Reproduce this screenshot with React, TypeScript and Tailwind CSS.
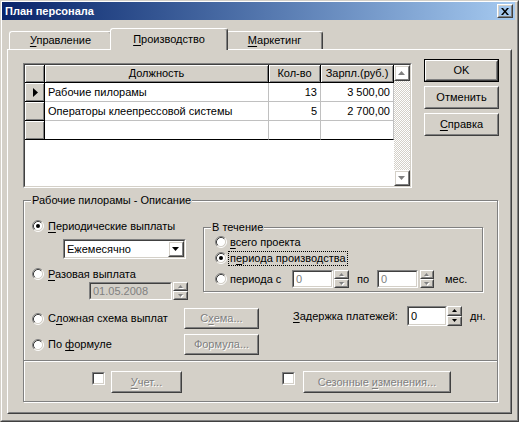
import type { ReactNode } from 'react'

const raisedOuter = 'border border-t-white border-l-white border-b-[#404040] border-r-[#404040]'
const raisedInner = 'border border-t-[#d4d0c8] border-l-[#d4d0c8] border-b-[#808080] border-r-[#808080]'
const sunkenOuter = 'border border-t-[#808080] border-l-[#808080] border-b-white border-r-white'
const sunkenInner = 'border border-t-[#404040] border-l-[#404040] border-b-[#d4d0c8] border-r-[#d4d0c8]'
const etched = 'border border-[#808080] shadow-[inset_1px_1px_0_#fff,1px_1px_0_#fff]'
const grayed = 'text-[#808080] [text-shadow:1px_1px_0_#fff]'
const fixedCell =
  'border-r border-b border-black bg-[#d4d0c8] shadow-[inset_1px_1px_0_#fff,inset_-1px_-1px_0_#808080]'

const ROWS = [
  { name: 'Рабочие пилорамы', qty: '13', pay: '3 500,00', current: true },
  { name: 'Операторы клеепрессовой системы', qty: '5', pay: '2 700,00', current: false },
  { name: '', qty: '', pay: '', current: false },
]

function Key({ children }: { children: ReactNode }) {
  return <span className="underline decoration-1 underline-offset-2">{children}</span>
}

function Raised({ className = '', children }: { className?: string; children?: ReactNode }) {
  return (
    <div className={`${raisedOuter} ${className}`}>
      <div className={`${raisedInner} flex h-full w-full items-center justify-center`}>{children}</div>
    </div>
  )
}

function Field({
  className = '',
  bg = 'bg-white',
  children,
}: {
  className?: string
  bg?: string
  children?: ReactNode
}) {
  return (
    <div className={`${sunkenOuter} ${className}`}>
      <div className={`${sunkenInner} flex h-full w-full items-center pl-[2px] ${bg}`}>{children}</div>
    </div>
  )
}

function Arrow({ dir, small = false, gray = false }: { dir: 'up' | 'down'; small?: boolean; gray?: boolean }) {
  const w = small ? 5 : 7
  const h = small ? 3 : 4
  const pts = dir === 'up' ? `${w / 2},0 ${w},${h} 0,${h}` : `0,0 ${w},0 ${w / 2},${h}`
  const shade =
    dir === 'up' ? `${w / 2 + 1},1 ${w + 1},${h + 1} 1,${h + 1}` : `1,1 ${w + 1},1 ${w / 2 + 1},${h + 1}`
  return (
    <svg width={w + 1} height={h + 1} className="shrink-0">
      {gray && <polygon points={shade} fill="#fff" />}
      <polygon points={pts} fill={gray ? '#808080' : '#000'} />
    </svg>
  )
}

function Spinner({ className = '', gray = false }: { className?: string; gray?: boolean }) {
  return (
    <div className={`flex flex-col ${className}`}>
      <Raised className="h-1/2 w-full">
        <Arrow dir="up" small gray={gray} />
      </Raised>
      <Raised className="h-1/2 w-full">
        <Arrow dir="down" small gray={gray} />
      </Raised>
    </div>
  )
}

function Radio({ checked = false }: { checked?: boolean }) {
  return (
    <svg width="12" height="12" viewBox="0 0 12 12" className="shrink-0">
      <circle cx="6" cy="6" r="4.5" fill="#fff" />
      <path d="M2.11 9.89A5.5 5.5 0 0 1 9.89 2.11" fill="none" stroke="#808080" />
      <path d="M9.89 2.11A5.5 5.5 0 0 1 2.11 9.89" fill="none" stroke="#fff" />
      <path d="M2.82 9.18A4.5 4.5 0 0 1 9.18 2.82" fill="none" stroke="#404040" />
      <path d="M9.18 2.82A4.5 4.5 0 0 1 2.82 9.18" fill="none" stroke="#d4d0c8" />
      {checked && <circle cx="6" cy="6" r="2" fill="#000" />}
    </svg>
  )
}

function Checkbox({ className = '' }: { className?: string }) {
  return (
    <div className={`${sunkenOuter} h-[13px] w-[13px] shrink-0 ${className}`}>
      <div className={`${sunkenInner} h-full w-full bg-white`} />
    </div>
  )
}

function Button({
  className = '',
  disabled = false,
  children,
}: {
  className?: string
  disabled?: boolean
  children: ReactNode
}) {
  return (
    <Raised className={className}>
      <span className={disabled ? grayed : ''}>{children}</span>
    </Raised>
  )
}

export default function App() {
  return (
    <div className="h-[422px] w-[519px] border border-t-[#d4d0c8] border-l-[#d4d0c8] border-b-[#404040] border-r-[#404040] bg-[#d4d0c8] font-['Liberation_Sans',Arial,sans-serif] text-[11px] leading-[13px] text-black">
      <div className="flex h-full w-full flex-col border border-t-white border-l-white border-b-[#808080] border-r-[#808080] pr-[2px] pb-[2px]">
        {/* title bar */}
        <div className="flex h-[18px] shrink-0 items-center bg-linear-to-r from-[#0a246a] to-[#a6caf0] pl-[3px] pr-[2px]">
          <span className="font-bold text-white">План персонала</span>
          <Raised className="ml-auto h-[14px] w-[16px]">
            <svg width="8" height="7" className="shrink-0">
              <path d="M0 0h2l2 2.5L6 0h2L5 3.5 8 7H6L4 4.5 2 7H0l3-3.5z" fill="#000" />
            </svg>
          </Raised>
        </div>

        {/* tabs */}
        <div className="ml-[5px] flex h-[29px] shrink-0 items-end pl-[2px]">
          <div className="flex h-[18px] w-[103px] items-center justify-center rounded-t-[3px] border-t border-l border-r border-t-white border-l-white border-r-[#404040] shadow-[inset_-1px_0_0_#808080]">
            <span>
              <Key>У</Key>правление
            </span>
          </div>
          <div className="relative z-10 -mx-[2px] -mb-px flex h-[22px] w-[118px] items-center justify-center rounded-t-[3px] border-t border-l border-r border-t-white border-l-white border-r-[#404040] bg-[#d4d0c8] shadow-[inset_-1px_0_0_#808080]">
            <span>
              <Key>П</Key>роизводство
            </span>
          </div>
          <div className="flex h-[18px] w-[97px] items-center justify-center rounded-t-[3px] border-t border-l border-r border-t-white border-l-white border-r-[#404040] shadow-[inset_-1px_0_0_#808080]">
            <span>
              <Key>М</Key>аркетинг
            </span>
          </div>
        </div>

        {/* tab panel */}
        <div className={`ml-[5px] h-[365px] w-[505px] shrink-0 ${raisedOuter}`}>
          <div className={`h-full w-full ${raisedInner}`}>
            <div className="flex items-start pl-[14px]">
              {/* grid */}
              <div className={`mt-[12px] h-[125px] w-[389px] ${sunkenOuter}`}>
                <div className={`flex h-full w-full bg-white ${sunkenInner}`}>
                  <div className="w-[369px]">
                    <div className="flex h-[18px]">
                      <div className={`w-[20px] ${fixedCell}`} />
                      <div className={`flex w-[224px] items-center justify-center ${fixedCell}`}>Должность</div>
                      <div className={`flex w-[52px] items-center justify-center ${fixedCell}`}>Кол-во</div>
                      <div className={`flex w-[73px] items-center justify-center ${fixedCell}`}>Зарпл.(руб.)</div>
                    </div>
                    {ROWS.map((r, i) => {
                      const line = i === ROWS.length - 1 ? 'border-b-black' : 'border-b-[#c0c0c0]'
                      return (
                        <div key={i} className="flex h-[19px]">
                          <div className={`flex w-[20px] items-center justify-center pl-[2px] ${fixedCell}`}>
                            {r.current && (
                              <svg width="5" height="9" className="shrink-0">
                                <polygon points="0,0 5,4.5 0,9" fill="#000" />
                              </svg>
                            )}
                          </div>
                          <div className={`flex w-[224px] items-center border-r border-b border-r-[#c0c0c0] pl-[3px] ${line}`}>
                            {r.name}
                          </div>
                          <div className={`flex w-[52px] items-center justify-end border-r border-b border-r-[#c0c0c0] pr-[3px] ${line}`}>
                            {r.qty}
                          </div>
                          <div className={`flex w-[73px] items-center justify-end border-r border-b border-r-[#c0c0c0] pr-[3px] ${line}`}>
                            {r.pay}
                          </div>
                        </div>
                      )
                    })}
                  </div>
                  <div className="flex w-[16px] flex-col">
                    <Raised className="h-[16px] w-[16px]">
                      <Arrow dir="up" gray />
                    </Raised>
                    <div className="flex-1 bg-[image:repeating-conic-gradient(#fff_0_25%,#d4d0c8_0_50%)] bg-[length:2px_2px]" />
                    <Raised className="h-[16px] w-[16px]">
                      <Arrow dir="down" gray />
                    </Raised>
                  </div>
                </div>
              </div>

              {/* dialog buttons */}
              <div className="ml-[12px] mt-[8px] flex flex-col gap-[4px]">
                <div className="h-[23px] w-[75px] border border-black">
                  <Raised className="h-full w-full">OK</Raised>
                </div>
                <Button className="h-[23px] w-[75px]">Отменить</Button>
                <Button className="h-[23px] w-[75px]">
                  <Key>С</Key>правка
                </Button>
              </div>
            </div>

            {/* description group */}
            <div className={`relative ml-[14px] mt-[12px] h-[202px] w-[475px] ${etched}`}>
              <span className="absolute -top-[7px] left-[7px] bg-[#d4d0c8] px-[1px]">Рабочие пилорамы - Описание</span>

              <div className="flex">
                <div className="flex w-[179px] flex-col">
                  <div className="ml-[8px] mt-[17px] flex h-[16px] items-center">
                    <Radio checked />
                    <span className="ml-[4px]">
                      <Key>П</Key>ериодические выплаты
                    </span>
                  </div>
                  <Field className="ml-[39px] mt-[5px] h-[20px] w-[123px]">
                    <span className="flex-1">Ежемесячно</span>
                    <Raised className="h-full w-[16px]">
                      <Arrow dir="down" />
                    </Raised>
                  </Field>
                  <div className="ml-[8px] mt-[7px] flex h-[16px] items-center">
                    <Radio />
                    <span className="ml-[4px]">
                      <Key>Р</Key>азовая выплата
                    </span>
                  </div>
                  <div className="ml-[65px] flex h-[18px]">
                    <Field className="h-full w-[83px]" bg="bg-[#d4d0c8]">
                      <span className="text-[#808080]">01.05.2008</span>
                    </Field>
                    <Spinner className="ml-[1px] h-full w-[15px]" gray />
                  </div>
                </div>

                <div className={`relative mt-[26px] h-[65px] w-[280px] ${etched}`}>
                  <span className="absolute -top-[7px] left-[7px] bg-[#d4d0c8] px-[1px]">В течение</span>
                  <div className="ml-[11px] mt-[6px] flex h-[16px] items-center">
                    <Radio />
                    <span className="ml-[3px]">
                      <Key>в</Key>сего проекта
                    </span>
                  </div>
                  <div className="ml-[11px] flex h-[16px] items-center">
                    <Radio checked />
                    <span className="ml-[1px] flex h-[15px] items-center border border-dotted border-black px-[1px]">
                      <span>
                        п<Key>е</Key>риода производства
                      </span>
                    </span>
                  </div>
                  <div className="ml-[11px] mt-[4px] flex h-[18px] items-center">
                    <Radio />
                    <span className="ml-[3px] w-[62px]">
                      перио<Key>д</Key>а с
                    </span>
                    <Field className="h-full w-[41px]">
                      <span className="text-[#808080]">0</span>
                    </Field>
                    <Spinner className="ml-[1px] h-full w-[15px]" gray />
                    <span className="ml-[8px] w-[20px]">по</span>
                    <Field className="h-full w-[41px]">
                      <span className="text-[#808080]">0</span>
                    </Field>
                    <Spinner className="ml-[2px] h-full w-[14px]" gray />
                    <span className="ml-[11px]">мес.</span>
                  </div>
                </div>
              </div>

              <div className="mt-[8px] flex h-[21px] items-center">
                <div className="ml-[8px] flex items-center">
                  <Radio />
                  <span className="ml-[4px] w-[136px]">
                    С<Key>л</Key>ожная схема выплат
                  </span>
                </div>
                <Button disabled className="h-[21px] w-[75px]">
                  С<Key>х</Key>ема...
                </Button>
                <div className="ml-[34px] -mt-[2px] flex h-[20px] items-center self-start">
                  <span className="w-[114px]">
                    <Key>З</Key>адержка платежей:
                  </span>
                  <Field className="h-full w-[40px]">0</Field>
                  <Spinner className="h-full w-[15px]" />
                  <span className="ml-[8px]">дн.</span>
                </div>
              </div>

              <div className="mt-[5px] flex h-[21px] items-center">
                <div className="ml-[8px] flex items-center">
                  <Radio />
                  <span className="ml-[4px] w-[136px]">
                    По <Key>ф</Key>ормуле
                  </span>
                </div>
                <Button disabled className="h-[21px] w-[75px]">
                  Формула...
                </Button>
              </div>

              <div className="mt-[5px] h-[2px] border-t border-b border-t-[#808080] border-b-white" />

              <div className="mt-[9px] flex items-start">
                <Checkbox className="ml-[68px] mt-[1px]" />
                <Button disabled className="ml-[6px] h-[22px] w-[71px]">
                  <Key>У</Key>чет...
                </Button>
                <Checkbox className="ml-[100px] mt-[1px]" />
                <Button disabled className="ml-[8px] h-[22px] w-[148px]">
                  Сезонные <Key>и</Key>зменения...
                </Button>
              </div>
            </div>
          </div>
        </div>
      </div>
    </div>
  )
}
